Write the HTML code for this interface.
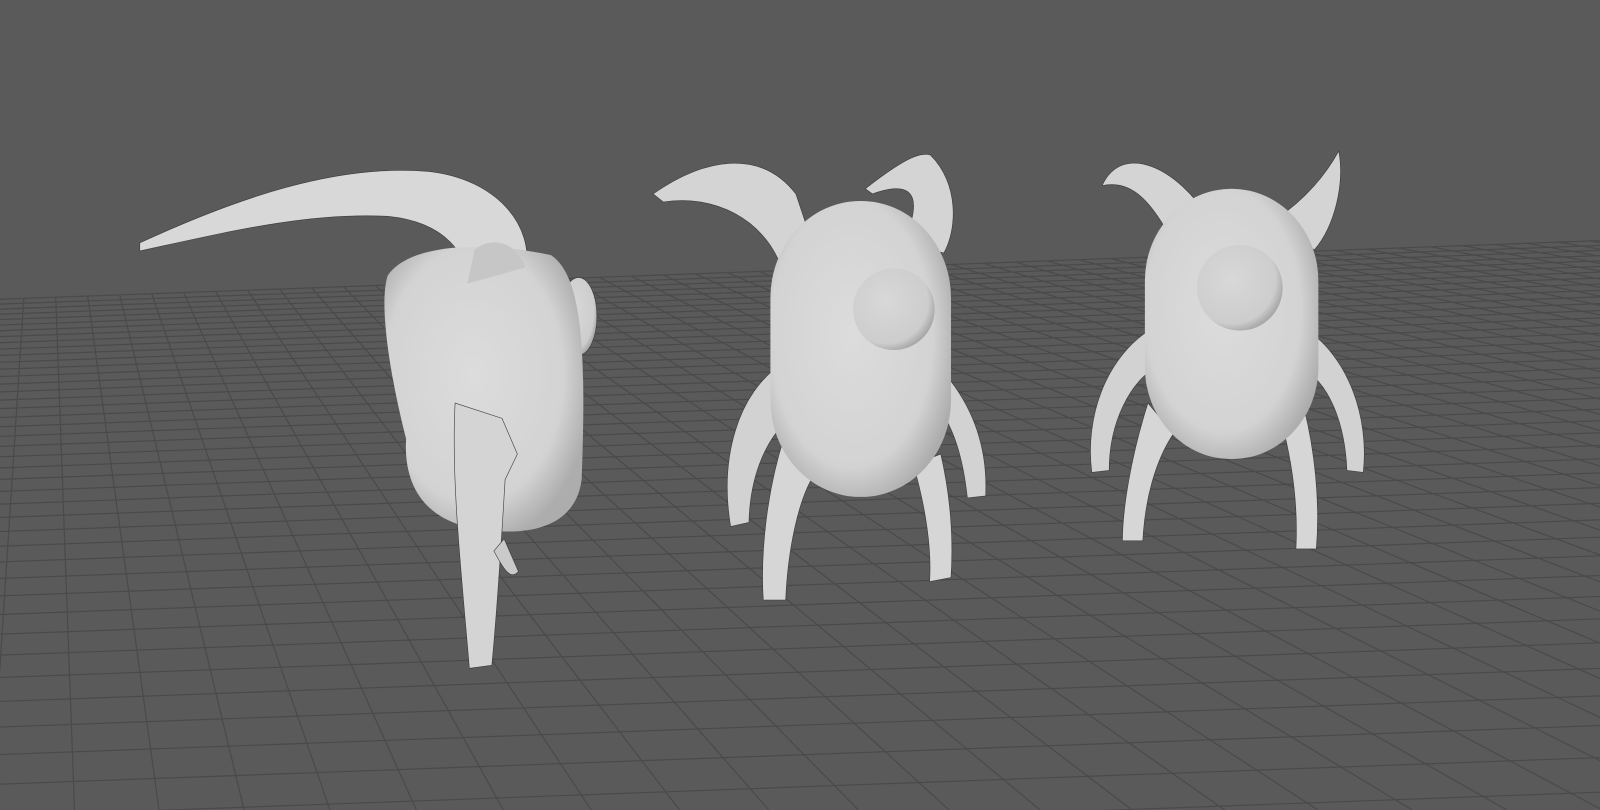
<!DOCTYPE html>
<html><head><meta charset="utf-8"><style>
html,body{margin:0;padding:0;background:#5a5a5a;width:1600px;height:810px;overflow:hidden}
svg{position:absolute;left:0;top:0}
</style></head><body>
<svg id="s" width="1600" height="810" viewBox="0 0 1600 810" xmlns="http://www.w3.org/2000/svg">
<defs>
<radialGradient id="bd" cx="0.45" cy="0.45" r="0.6">
<stop offset="0" stop-color="#dcdcdc"/><stop offset="0.75" stop-color="#d3d3d3"/><stop offset="1" stop-color="#adadad"/></radialGradient>
<radialGradient id="ey" cx="0.4" cy="0.4" r="0.65">
<stop offset="0" stop-color="#d8d8d8"/><stop offset="0.8" stop-color="#cdcdcd"/><stop offset="1" stop-color="#a0a0a0"/></radialGradient>
</defs>
<rect width="1600" height="810" fill="#5a5a5a"/>
<g id="grid" stroke="#4a4a4a" stroke-width="1.2" fill="none"></g>
<g transform="scale(1.0204)" fill="#d6d6d6" stroke="#3c3c3c" stroke-width="0.6">
<!-- creature 1 -->
<path d="M137,238 C230,195 330,160 420,168 C485,175 525,220 515,268 L465,282 C455,250 440,218 380,212 C300,208 220,228 137,246 Z" fill="#d8d8d8"/>
<ellipse cx="567" cy="310" rx="18" ry="38" fill="url(#ey)"/>
<path d="M380,270 C400,240 470,235 540,250 C570,270 575,340 570,470 C565,510 530,525 480,520 C420,515 395,480 398,430 C385,380 370,300 380,270 Z" fill="url(#bd)" stroke="none"/>
<path d="M515,262 C505,235 480,232 465,245 L458,278 Z" fill="#c6c6c6" stroke="none"/>
<path d="M446,395 C442,470 452,560 460,655 L482,652 C488,590 492,520 495,470 L507,445 L492,410 Z" fill="#d4d4d4"/>
<path d="M484,540 C492,555 500,570 508,560 L494,528 Z" fill="#cacaca"/>
<!-- creature 2 -->
<path d="M640,190 C690,155 745,145 780,190 L800,250 L765,260 C748,215 700,190 650,198 Z" fill="#d4d4d4"/>
<path d="M848,185 C880,160 900,148 912,152 C940,180 938,225 925,248 L885,238 C900,205 905,172 855,190 Z" fill="#d4d4d4"/>
<path d="M768,355 C722,385 705,450 716,516 L734,512 C735,465 752,425 780,405 Z" fill="#d2d2d2"/>
<path d="M925,365 C955,400 968,440 966,486 L948,488 C944,450 935,420 920,400 Z" fill="#d2d2d2"/>
<path d="M768,430 C752,480 745,540 748,588 L770,588 C772,540 782,490 798,465 Z" fill="#d6d6d6"/>
<path d="M895,455 C908,500 913,540 911,570 L932,566 C935,520 930,480 922,445 Z" fill="#d6d6d6"/>
<rect x="755" y="197" width="177" height="290" rx="88" ry="95" fill="url(#bd)" stroke="none"/>
<circle cx="876" cy="303" r="40" fill="url(#ey)" stroke="none"/>
<!-- creature 3 -->
<path d="M1080,182 C1100,138 1155,165 1185,215 L1150,238 C1130,200 1110,175 1080,182 Z" fill="#d4d4d4"/>
<path d="M1312,148 C1318,180 1308,222 1288,245 L1250,215 C1280,195 1300,170 1312,148 Z" fill="#d4d4d4"/>
<path d="M1132,320 C1083,348 1063,410 1070,463 L1087,461 C1087,415 1107,372 1138,357 Z" fill="#d2d2d2"/>
<path d="M1276,320 C1322,348 1342,410 1336,463 L1320,461 C1318,415 1303,377 1278,362 Z" fill="#d2d2d2"/>
<path d="M1125,395 C1108,448 1100,500 1100,530 L1120,530 C1122,490 1132,452 1150,425 Z" fill="#d6d6d6"/>
<path d="M1255,410 C1268,458 1272,500 1270,538 L1290,538 C1294,490 1288,440 1278,400 Z" fill="#d6d6d6"/>
<rect x="1122" y="185" width="170" height="265" rx="85" ry="90" fill="url(#bd)" stroke="none"/>
<circle cx="1215" cy="282" r="42" fill="url(#ey)" stroke="none"/>
</g>
</svg>
<script>
(function(){
var g=document.getElementById('grid'),ns='http://www.w3.org/2000/svg';
var yh=-53,fh=20790,f=2112,cx=60,cy=400,ang=-2.1*Math.PI/180;
var ca=Math.cos(ang),sa=Math.sin(ang);
function P(x,z){var X=cx+f*x/z,Y=yh+fh/z+8;var dx=X-800,dy=Y-cy;return [800+dx*ca-dy*sa,cy+dx*sa+dy*ca];}
var zn=18,zf=66;
function L(a,b){var l=document.createElementNS(ns,'line');l.setAttribute('x1',a[0].toFixed(1));l.setAttribute('y1',a[1].toFixed(1));l.setAttribute('x2',b[0].toFixed(1));l.setAttribute('y2',b[1].toFixed(1));g.appendChild(l);}
for(var z=zn;z<=zf;z++){L(P(-60,z),P(120,z));}
for(var x=-60;x<=120;x++){L(P(x,zn),P(x,zf));}
})();
</script>
</body></html>
